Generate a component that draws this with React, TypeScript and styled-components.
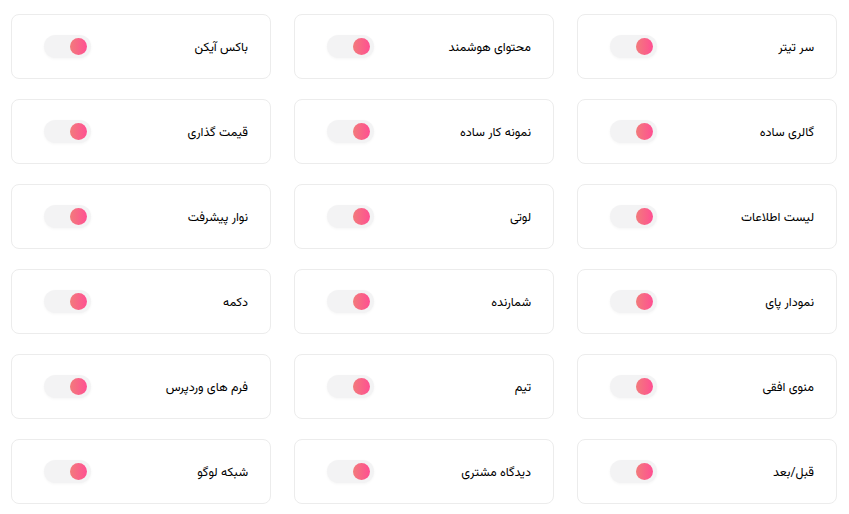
import React from "react";
import styled, { createGlobalStyle } from "styled-components";

const GlobalStyle = createGlobalStyle`
  html, body {
    margin: 0;
    padding: 0;
    background: #ffffff;
  }
  body {
    font-family: Vazirmatn, "DejaVu Sans", "Noto Sans", sans-serif;
  }
`;

const Page = styled.div`
  direction: rtl;
  width: 849px;
  box-sizing: border-box;
  padding: 14px 12px 0 11px;
`;

const Grid = styled.div`
  display: grid;
  grid-template-columns: repeat(3, 260px);
  column-gap: 23px;
  row-gap: 20px;
`;

const Card = styled.div`
  height: 65px;
  box-sizing: border-box;
  border: 1px solid #ececec;
  border-radius: 8px;
  background: #fff;
  display: flex;
  align-items: center;
  justify-content: space-between;
  padding: 0 22px 0 32px;
`;

const Label = styled.span`
  font-size: 12.5px;
  font-weight: 400;
  color: #000000;
  line-height: 1;
  padding-top: 3px;
`;

const Track = styled.button<{ $on: boolean }>`
  direction: ltr;
  width: 47px;
  height: 23px;
  border: none;
  border-radius: 12px;
  background: #f3f3f4;
  box-shadow: 0 1px 3px rgba(0, 0, 0, 0.04);
  padding: 0 4px;
  display: flex;
  align-items: center;
  justify-content: ${(p) => (p.$on ? "flex-end" : "flex-start")};
  cursor: pointer;
`;

const Knob = styled.span`
  width: 17px;
  height: 17px;
  border-radius: 50%;
  background: linear-gradient(90deg, #f27b7b 0%, #ff4f92 100%);
`;

const items = [
  "سر تیتر",
  "محتوای هوشمند",
  "باکس آیکن",
  "گالری ساده",
  "نمونه کار ساده",
  "قیمت گذاری",
  "لیست اطلاعات",
  "لوتی",
  "نوار پیشرفت",
  "نمودار پای",
  "شمارنده",
  "دکمه",
  "منوی افقی",
  "تیم",
  "فرم های وردپرس",
  "قبل/بعد",
  "دیدگاه مشتری",
  "شبکه لوگو",
];

const Toggle = ({ on }: { on: boolean }) => (
  <Track $on={on} aria-pressed={on}>
    <Knob />
  </Track>
);

export default function App() {
  return (
    <>
      <GlobalStyle />
      <Page>
        <Grid>
          {items.map((name) => (
            <Card key={name}>
              <Label>{name}</Label>
              <Toggle on />
            </Card>
          ))}
        </Grid>
      </Page>
    </>
  );
}
